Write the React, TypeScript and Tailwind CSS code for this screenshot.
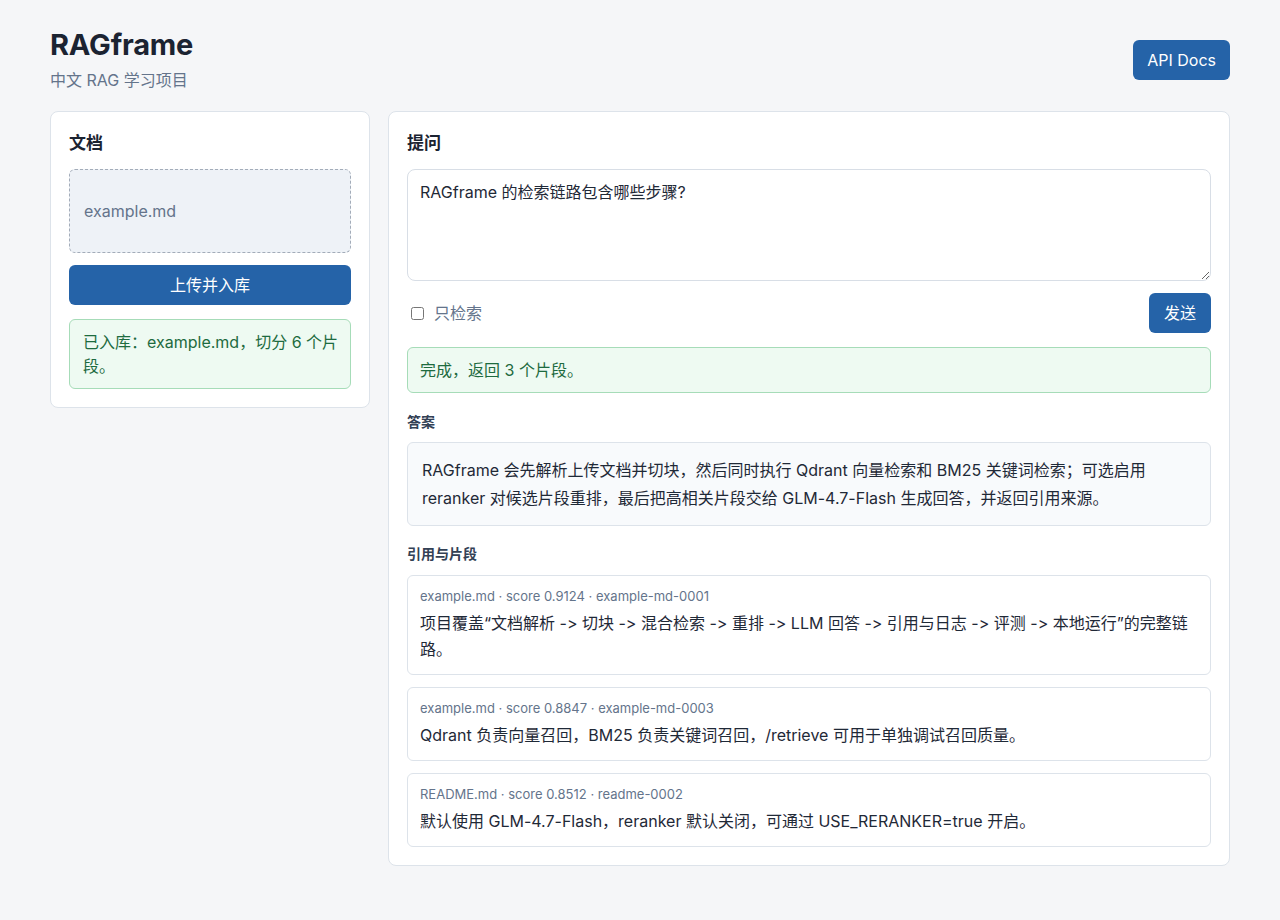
import React from "react";

const font = { fontFamily: '"Inter", "Noto Sans CJK SC", "Noto Sans", sans-serif' };

const citations = [
  {
    meta: "example.md · score 0.9124 · example-md-0001",
    text: "项目覆盖“文档解析 -> 切块 -> 混合检索 -> 重排 -> LLM 回答 -> 引用与日志 -> 评测 -> 本地运行”的完整链路。",
  },
  {
    meta: "example.md · score 0.8847 · example-md-0003",
    text: "Qdrant 负责向量召回，BM25 负责关键词召回，/retrieve 可用于单独调试召回质量。",
  },
  {
    meta: "README.md · score 0.8512 · readme-0002",
    text: "默认使用 GLM-4.7-Flash，reranker 默认关闭，可通过 USE_RERANKER=true 开启。",
  },
];

export default function App() {
  return (
    <div className="min-h-[920px] w-full bg-[#f5f6f8] text-[#1f2937] [font-variant-ligatures:none]" style={font}>
      <div className="mx-auto w-[1180px] pt-[27px] pb-10">
        <header className="flex items-center justify-between mb-[19px]">
          <div>
            <h1 className="text-[29px] leading-[35px] font-bold text-[#1b2331] tracking-[-0.2px]">RAGframe</h1>
            <p className="mt-[6px] text-[16px] leading-[24px] text-[#64748b]">中文 RAG 学习项目</p>
          </div>
          <button className="h-10 px-[14px] rounded-[6px] bg-[#2563a8] text-white text-[16px]">API Docs</button>
        </header>

        <div className="flex items-start gap-[18px]">
          <section className="w-[320px] shrink-0 bg-white border border-[#dde3ea] rounded-[8px] p-[18px]">
            <h2 className="text-[17px] leading-[26px] font-semibold text-[#1b2331] mb-[13px]">文档</h2>
            <div className="h-[84px] rounded-[6px] border border-dashed border-[#a3acb9] bg-[#eef2f7] flex items-center px-[14px] text-[16px] text-[#64748b]">
              example.md
            </div>
            <button className="mt-3 w-full h-10 rounded-[6px] bg-[#2563a8] text-white text-[16px]">上传并入库</button>
            <div className="mt-[14px] rounded-[6px] border border-[#a6dcb8] bg-[#eefaf2] pl-[13px] pr-[8px] py-[10px] text-[16px] leading-[24px] text-[#1d6b3f]">
              已入库：example.md，切分 6 个片段。
            </div>
          </section>

          <section className="flex-1 bg-white border border-[#dde3ea] rounded-[8px] p-[18px]">
            <h2 className="text-[17px] leading-[26px] font-semibold text-[#1b2331] mb-[13px]">提问</h2>
            <textarea
              className="block w-full h-[112px] rounded-[8px] border border-[#d8dee6] px-[12px] py-[10px] text-[16px] leading-[24px] text-[#1f2937] outline-none"
              defaultValue="RAGframe 的检索链路包含哪些步骤?"
              style={font}
            />
            <div className="mt-3 flex items-center justify-between">
              <label className="flex items-center gap-[10px] pl-[4px] text-[16px] text-[#64748b]">
                <input type="checkbox" className="w-[13px] h-[13px]" />
                只检索
              </label>
              <button className="h-10 px-[15px] rounded-[6px] bg-[#2563a8] text-white text-[16px]">发送</button>
            </div>
            <div className="mt-[14px] rounded-[6px] border border-[#a6dcb8] bg-[#eefaf2] px-[12px] py-[10px] text-[16px] leading-[24px] text-[#1d6b3f]">
              完成，返回 3 个片段。
            </div>

            <h3 className="mt-[19px] mb-[10px] text-[14px] leading-[20px] font-semibold text-[#334155]">答案</h3>
            <div className="rounded-[6px] border border-[#dde3ea] bg-[#f8fafc] px-[14px] py-[13px] text-[16px] leading-[28px] text-[#1f2937]">
              RAGframe 会先解析上传文档并切块，然后同时执行 Qdrant 向量检索和 BM25 关键词检索；可选启用 reranker 对候选片段重排，最后把高相关片段交给 GLM-4.7-Flash 生成回答，并返回引用来源。
            </div>

            <h3 className="mt-[18px] mb-[11px] text-[14px] leading-[20px] font-semibold text-[#334155]">引用与片段</h3>
            <div className="flex flex-col gap-3">
              {citations.map((c) => (
                <div key={c.meta} className="rounded-[6px] border border-[#dde3ea] bg-white px-[12px] pt-[11px] pb-[12px]">
                  <div className="text-[13px] leading-[18px] text-[#64748b] mb-[5px]">{c.meta}</div>
                  <div className="text-[16px] leading-[26px] text-[#1f2937]">{c.text}</div>
                </div>
              ))}
            </div>
          </section>
        </div>
      </div>
    </div>
  );
}
